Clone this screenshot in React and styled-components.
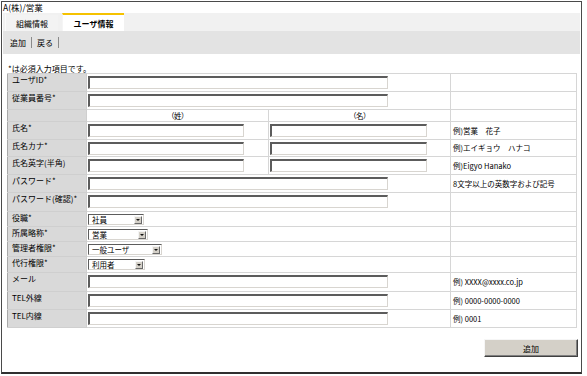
import React from 'react';
import styled, { createGlobalStyle } from 'styled-components';

const Global = createGlobalStyle`
  html, body { margin: 0; padding: 0; background: #fff; }
  body {
    font-family: "Noto Sans CJK JP", "Noto Sans", sans-serif;
    color: #000;
    font-size: 8px;
  }
`;

const Frame = styled.div`
  box-sizing: border-box;
  margin: 1px 0 0 1px;
  width: 581px;
  height: 373px;
  border: 1px solid #4a4a4a;
  border-bottom: 2px solid #303030;
  padding: 0 1px;
  display: flex;
  flex-direction: column;
`;

const Crumb = styled.div`
  height: 11px;
  line-height: 11px;
  font-size: 8.5px;
  white-space: nowrap;
`;

const TabBar = styled.div`
  height: 18px;
  background: #f1f1f1;
  display: flex;
  align-items: stretch;
  padding-left: 2px;
  gap: 4px;
`;

const Tab = styled.div`
  box-sizing: border-box;
  width: ${p => p.$w}px;
  display: flex;
  align-items: center;
  justify-content: center;
  font-size: 8px;
  font-weight: ${p => (p.$active ? 700 : 400)};
  background: ${p => (p.$active ? '#ffffff' : '#f3f3f3')};
  border-top: 2px solid ${p => (p.$active ? '#f5c200' : '#f1f1f1')};
  border-left: 1px solid ${p => (p.$active ? '#f5f5f5' : '#fafafa')};
`;

const Toolbar = styled.div`
  height: 23px;
  background: #e3e3e3;
  display: flex;
  align-items: center;
  padding-left: 7px;
  gap: 5px;
`;

const ToolLink = styled.span`
  font-size: 8px;
  line-height: 10px;
`;

const ToolSep = styled.span`
  width: 1px;
  height: 11px;
  background: #8a8a8a;
`;

const Required = styled.div`
  margin: 10px 0 0 5px;
  height: 9px;
  line-height: 9px;
  font-size: 8px;
`;

const FormTable = styled.table`
  margin-left: 4px;
  width: 569px;
  table-layout: fixed;
  border-collapse: collapse;
  border: 1px solid #a9a9a9;
`;

const Col = styled.col`
  width: ${p => p.$w}px;
`;

const Row = styled.tr`
  height: ${p => p.$h}px;
  & > td { height: ${p => p.$h - 1}px; }
`;

const LabelCell = styled.td`
  box-sizing: border-box;
  background: #d9d9d9;
  border: 1px solid #cfcfcf;
  border-left: 1px solid #a9a9a9;
  padding: 1px 4px 0;
  vertical-align: top;
  font-size: 8px;
  line-height: 10px;
  white-space: nowrap;
`;

const FieldCell = styled.td`
  box-sizing: border-box;
  border: 1px solid #d6d6d6;
  padding: 2px 1px 0;
  vertical-align: top;
`;

const HeadCell = styled.td`
  border: 1px solid #d6d6d6;
  padding: 0;
  text-align: center;
  vertical-align: middle;
  font-size: 7.5px;
  line-height: 10px;
  letter-spacing: -0.5px;
`;

const NoteCell = styled.td`
  border: 1px solid #d6d6d6;
  padding: 0 2px;
  vertical-align: middle;
  font-size: 7.5px;
  line-height: 10px;
  white-space: nowrap;
`;

const TextInput = styled.input`
  box-sizing: border-box;
  display: block;
  width: ${p => p.$w}px;
  height: 13px;
  margin: 0;
  padding: 0 2px;
  border-style: solid;
  border-width: 2px 1px 1px 2px;
  border-color: #5c5c5c #d8d5d0 #d8d5d0 #5c5c5c;
  background: #fff;
  font-size: 8px;
  outline: none;
`;

const Dropdown = styled.div`
  box-sizing: border-box;
  width: ${p => p.$w}px;
  height: 11px;
  display: flex;
  align-items: center;
  border-style: solid;
  border-width: 1px;
  border-color: #5c5c5c #d8d5d0 #d8d5d0 #5c5c5c;
  background: #fff;
  padding-left: 3px;
  font-size: 7.5px;
  line-height: 9px;
`;

const DropText = styled.span`
  flex: 1;
  white-space: nowrap;
`;

const DropButton = styled.span`
  box-sizing: border-box;
  width: 8px;
  height: 8px;
  margin-right: 1px;
  background: #d4d0c8;
  border-style: solid;
  border-width: 1px;
  border-color: #f4f4f4 #6a6a6a #6a6a6a #f4f4f4;
  display: flex;
  align-items: center;
  justify-content: center;
  &::after {
    content: '';
    width: 0;
    height: 0;
    border-left: 2px solid transparent;
    border-right: 2px solid transparent;
    border-top: 2px solid #111;
    margin-top: 1px;
  }
`;

const ButtonRow = styled.div`
  display: flex;
  justify-content: flex-end;
  padding-right: 2px;
  margin-top: 11px;
`;

const SubmitButton = styled.button`
  box-sizing: border-box;
  width: 94px;
  height: 18px;
  padding: 0;
  background: #d4d0c8;
  border-style: solid;
  border-width: 1px;
  border-color: #f6f6f6 #404040 #404040 #f6f6f6;
  box-shadow: inset -1px -1px #808080;
  font-family: "Noto Sans CJK JP", sans-serif;
  font-size: 8px;
  color: #000;
`;

const rows = [
  { label: 'ユーザID*', kind: 'text', h: 18 },
  { label: '従業員番号*', kind: 'text', h: 18 },
  { kind: 'head', h: 12 },
  { label: '氏名*', kind: 'name', note: '例)営業　花子', h: 18 },
  { label: '氏名カナ*', kind: 'name', note: '例)エイギョウ　ハナコ', h: 17 },
  { label: '氏名英字(半角)', kind: 'name', note: '例)Eigyo Hanako', h: 18 },
  { label: 'パスワード*', kind: 'text', note: '8文字以上の英数字および記号', h: 18 },
  { label: 'パスワード(確認)*', kind: 'text', h: 19 },
  { label: '役職*', kind: 'select', value: '社員', sw: 56, h: 15 },
  { label: '所属略称*', kind: 'select', value: '営業', sw: 60, h: 15 },
  { label: '管理者権限*', kind: 'select', value: '一般ユーザ', sw: 74, h: 15 },
  { label: '代行権限*', kind: 'select', value: '利用者', sw: 57, h: 16 },
  { label: 'メール', kind: 'text', note: '例) XXXX@xxxx.co.jp', h: 19 },
  { label: 'TEL外線', kind: 'text', note: '例) 0000-0000-0000', h: 18 },
  { label: 'TEL内線', kind: 'text', note: '例) 0001', h: 18 },
];

function FormRow({ r }) {
  if (r.kind === 'head') {
    return (
      <Row $h={r.h}>
        <LabelCell />
        <HeadCell>（姓）</HeadCell>
        <HeadCell>（名）</HeadCell>
        <NoteCell />
      </Row>
    );
  }
  if (r.kind === 'name') {
    return (
      <Row $h={r.h}>
        <LabelCell>{r.label}</LabelCell>
        <FieldCell><TextInput $w={156} /></FieldCell>
        <FieldCell><TextInput $w={157} /></FieldCell>
        <NoteCell>{r.note}</NoteCell>
      </Row>
    );
  }
  return (
    <Row $h={r.h}>
      <LabelCell>{r.label}</LabelCell>
      <FieldCell colSpan={2}>
        {r.kind === 'select' ? (
          <Dropdown $w={r.sw}>
            <DropText>{r.value}</DropText>
            <DropButton />
          </Dropdown>
        ) : (
          <TextInput $w={300} type={r.label.startsWith('パスワード') ? 'password' : 'text'} />
        )}
      </FieldCell>
      <NoteCell>{r.note || ''}</NoteCell>
    </Row>
  );
}

export default function App() {
  return (
    <>
      <Global />
      <Frame>
        <Crumb>A(株)/営業</Crumb>
        <TabBar>
          <Tab $w={53}>組織情報</Tab>
          <Tab $w={62} $active>ユーザ情報</Tab>
        </TabBar>
        <Toolbar>
          <ToolLink>追加</ToolLink>
          <ToolSep />
          <ToolLink>戻る</ToolLink>
          <ToolSep />
        </Toolbar>
        <Required>*は必須入力項目です。</Required>
        <FormTable>
          <colgroup>
            <Col $w={79} />
            <Col $w={182} />
            <Col $w={182} />
            <Col $w={126} />
          </colgroup>
          <tbody>
            {rows.map((r, i) => (
              <FormRow key={i} r={r} />
            ))}
          </tbody>
        </FormTable>
        <ButtonRow>
          <SubmitButton>追加</SubmitButton>
        </ButtonRow>
      </Frame>
    </>
  );
}
